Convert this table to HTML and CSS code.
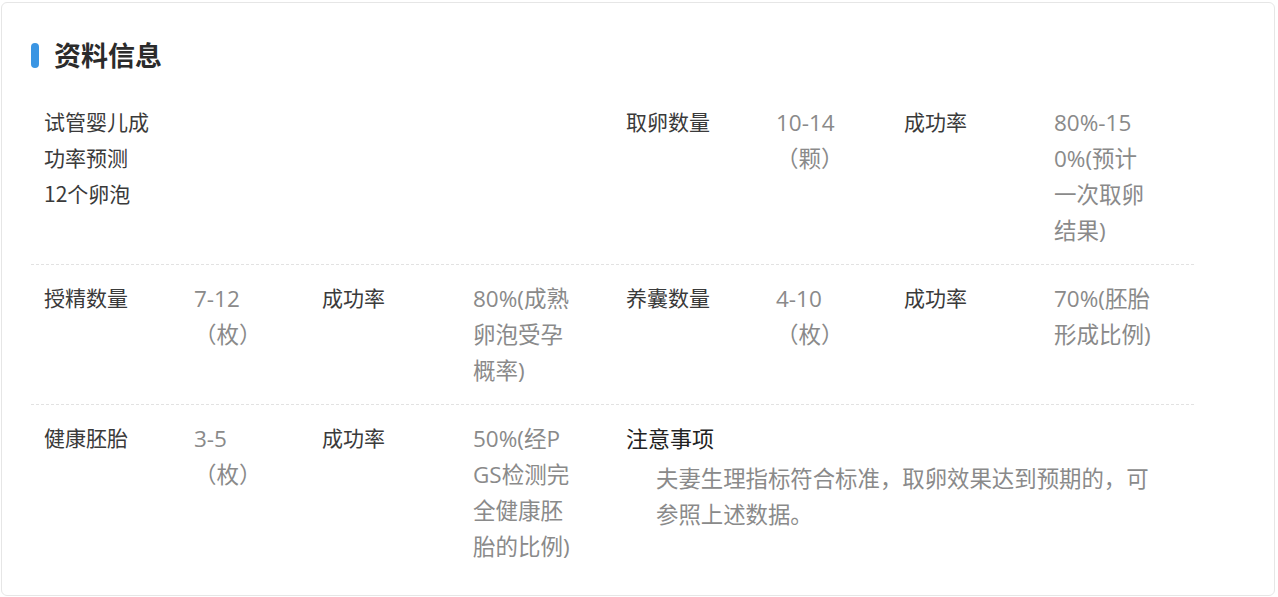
FILE: index.html
```html
<!DOCTYPE html>
<html lang="zh-CN">
<head>
<meta charset="utf-8">
<title>资料信息</title>
<link rel="stylesheet" href="styles.css">
</head>
<body>
<div class="card">
  <div class="card-head">
    <span class="bar"></span>
    <h2 class="title">资料信息</h2>
  </div>
  <div class="table">
    <div class="row">
      <div class="cell label span4">试管婴儿成<br>功率预测<br>12个卵泡</div>
      <div class="cell label">取卵数量</div>
      <div class="cell value">10-14<br>（颗）</div>
      <div class="cell label">成功率</div>
      <div class="cell value">80%-15<br>0%(预计<br>一次取卵<br>结果)</div>
    </div>
    <div class="row">
      <div class="cell label">授精数量</div>
      <div class="cell value">7-12<br>（枚）</div>
      <div class="cell label">成功率</div>
      <div class="cell value">80%(成熟<br>卵泡受孕<br>概率)</div>
      <div class="cell label">养囊数量</div>
      <div class="cell value">4-10<br>（枚）</div>
      <div class="cell label">成功率</div>
      <div class="cell value">70%(胚胎<br>形成比例)</div>
    </div>
    <div class="row last">
      <div class="cell label">健康胚胎</div>
      <div class="cell value">3-5<br>（枚）</div>
      <div class="cell label">成功率</div>
      <div class="cell value">50%(经P<br>GS检测完<br>全健康胚<br>胎的比例)</div>
      <div class="cell note span4">
        <div class="note-title">注意事项</div>
        <p class="note-text">夫妻生理指标符合标准，取卵效果达到预期的，可参照上述数据。</p>
      </div>
    </div>
  </div>
</div>
</body>
</html>
```

FILE: styles.css
```css
* { box-sizing: border-box; }

html, body {
  margin: 0;
  padding: 0;
  background: #ffffff;
}

body {
  font-family: "Noto Sans CJK SC", sans-serif;
  color: #333333;
}

.card {
  margin: 2px 3px 0 1px;
  height: 594px;
  border: 1px solid #e6e6e6;
  border-radius: 6px;
  padding: 34px 0 0 29px;
}

.card-head {
  display: flex;
  align-items: center;
  height: 36px;
}

.bar {
  width: 8px;
  height: 25px;
  border-radius: 4px;
  background: #3a95e3;
  margin-right: 15px;
}

.title {
  margin: 0;
  font-size: 27px;
  line-height: 36px;
  font-weight: 700;
  color: #2b2b2b;
  font-family: "Noto Sans CJK SC", sans-serif;
}

.table {
  width: 1163px;
  margin-top: 30px;
}

.row {
  display: grid;
  grid-template-columns: 150px 128px 151px 153px 150px 128px 150px 153px;
  padding: 0 0 15px;
  border-bottom: 1px dashed #e2e2e2;
  margin-bottom: 14px;
}

.row.last {
  border-bottom: none;
  margin-bottom: 0;
}

.cell {
  padding-left: 13px;
  line-height: 36px;
}

.span4 {
  grid-column: span 4;
}

.label {
  font-size: 21px;
  color: #3a3a3a;
  font-family: "Noto Sans CJK SC", sans-serif;
}

.value {
  padding-top: 2px;
  font-size: 22.5px;
  color: #8a8a8a;
  font-family: "Open Sans", "Noto Sans CJK SC", sans-serif;
}

.note-title {
  font-size: 22px;
  color: #222222;
  font-family: "Noto Sans CJK SC", sans-serif;
}

.note-text {
  margin: 4px 0 0;
  padding-left: 30px;
  width: calc(22.4em + 30px);
  font-size: 22.4px;
  line-height: 36px;
  color: #8a8a8a;
  font-family: "Noto Sans CJK SC", sans-serif;
}
```
